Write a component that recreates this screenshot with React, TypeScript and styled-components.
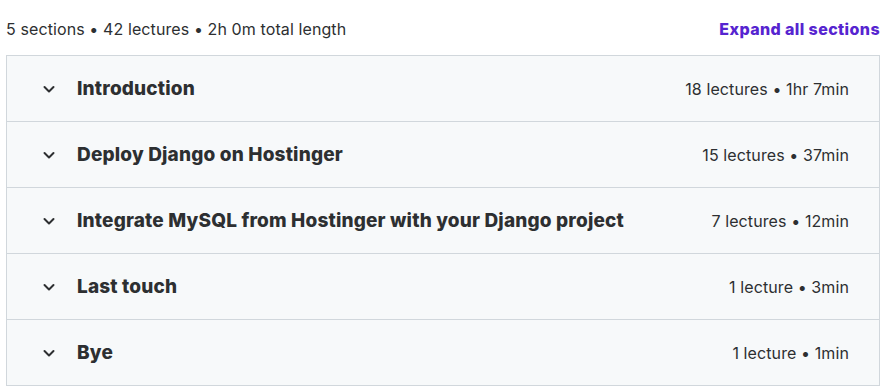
import React from 'react'
import styled, { createGlobalStyle } from 'styled-components'

const GlobalStyle = createGlobalStyle`
  body {
    margin: 0;
    background: #fff;
    font-family: Inter, "Liberation Sans", sans-serif;
    color: #2d2f31;
  }
`

const Wrapper = styled.div`
  padding: 0 6px;
  width: 886px;
  box-sizing: border-box;
`

const TopBar = styled.div`
  display: flex;
  justify-content: space-between;
  align-items: center;
  height: 55px;
  padding-top: 3px;
  box-sizing: border-box;
`

const Summary = styled.span`
  font-size: 16px;
  letter-spacing: 0.1px;
  color: #2d2f31;
`

const ExpandLink = styled.button`
  border: none;
  background: none;
  padding: 0;
  font-family: inherit;
  font-size: 16px;
  font-weight: 800;
  letter-spacing: 0.4px;
  color: #5624d0;
  cursor: pointer;
`

const Panel = styled.div`
  border: 1px solid #d1d7dc;
  border-bottom: none;
`

const Row = styled.div`
  display: flex;
  align-items: center;
  height: 65px;
  padding: 0 30px 0 34px;
  background: #f7f9fa;
  border-bottom: 1px solid #d1d7dc;
`

const Chevron = styled.span`
  display: flex;
  width: 16px;
  margin-right: 20px;
`

const Title = styled.h3`
  flex: 1;
  margin: 0;
  font-size: 19px;
  font-weight: 800;
  letter-spacing: 0.17px;
  color: #2d2f31;
`

const Meta = styled.span`
  font-size: 16px;
  letter-spacing: 0.1px;
  color: #2d2f31;
`

const sections = [
  { title: 'Introduction', meta: '18 lectures • 1hr 7min' },
  { title: 'Deploy Django on Hostinger', meta: '15 lectures • 37min' },
  { title: 'Integrate MySQL from Hostinger with your Django project', meta: '7 lectures • 12min' },
  { title: 'Last touch', meta: '1 lecture • 3min' },
  { title: 'Bye', meta: '1 lecture • 1min' },
]

const ChevronIcon = () => (
  <svg width="16" height="16" viewBox="0 0 16 16" fill="none">
    <path d="M3.5 6l4.5 4.5L12.5 6" stroke="#2d2f31" strokeWidth="2" strokeLinecap="round" strokeLinejoin="round" />
  </svg>
)

export default function App() {
  return (
    <>
      <GlobalStyle />
      <Wrapper>
        <TopBar>
          <Summary>5 sections • 42 lectures • 2h 0m total length</Summary>
          <ExpandLink>Expand all sections</ExpandLink>
        </TopBar>
        <Panel>
          {sections.map((s) => (
            <Row key={s.title}>
              <Chevron>
                <ChevronIcon />
              </Chevron>
              <Title>{s.title}</Title>
              <Meta>{s.meta}</Meta>
            </Row>
          ))}
        </Panel>
      </Wrapper>
    </>
  )
}
